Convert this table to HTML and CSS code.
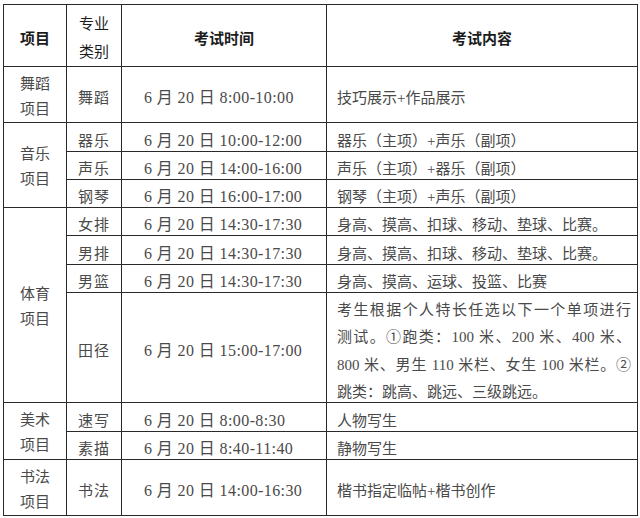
FILE: index.html
```html
<!DOCTYPE html>
<html lang="zh-CN">
<head>
<meta charset="utf-8">
<title>考试安排</title>
<link rel="stylesheet" href="styles.css">
</head>
<body>
<table class="schedule">
  <colgroup>
    <col class="c-group">
    <col class="c-major">
    <col class="c-time">
    <col class="c-content">
  </colgroup>
  <thead>
    <tr class="r-head">
      <th class="strong">项目</th>
      <th class="light two">专业<br>类别</th>
      <th class="strong">考试时间</th>
      <th class="strong">考试内容</th>
    </tr>
  </thead>
  <tbody>
    <tr class="r-double">
      <td class="group">舞蹈<br>项目</td>
      <td class="major">舞蹈</td>
      <td class="time">6 月 20 日 8:00-10:00</td>
      <td class="content">技巧展示+作品展示</td>
    </tr>
    <tr class="r-29">
      <td class="group" rowspan="3">音乐<br>项目</td>
      <td class="major">器乐</td>
      <td class="time">6 月 20 日 10:00-12:00</td>
      <td class="content">器乐（主项）+声乐（副项）</td>
    </tr>
    <tr class="r-28">
      <td class="major">声乐</td>
      <td class="time">6 月 20 日 14:00-16:00</td>
      <td class="content">声乐（主项）+器乐（副项）</td>
    </tr>
    <tr class="r-28">
      <td class="major">钢琴</td>
      <td class="time">6 月 20 日 16:00-17:00</td>
      <td class="content">钢琴（主项）+声乐（副项）</td>
    </tr>
    <tr class="r-28">
      <td class="group" rowspan="4">体育<br>项目</td>
      <td class="major">女排</td>
      <td class="time">6 月 20 日 14:30-17:30</td>
      <td class="content">身高、摸高、扣球、移动、垫球、比赛。</td>
    </tr>
    <tr class="r-29">
      <td class="major">男排</td>
      <td class="time">6 月 20 日 14:30-17:30</td>
      <td class="content">身高、摸高、扣球、移动、垫球、比赛。</td>
    </tr>
    <tr class="r-28">
      <td class="major">男篮</td>
      <td class="time">6 月 20 日 14:30-17:30</td>
      <td class="content">身高、摸高、运球、投篮、比赛</td>
    </tr>
    <tr class="r-tall">
      <td class="major">田径</td>
      <td class="time">6 月 20 日 15:00-17:00</td>
      <td class="content para">
        <div class="para-inner">
          <span class="jline">考生根据个人特长任选以下一个单项进行</span>
          <span class="jline">测试。①跑类：100 米、200 米、400 米、</span>
          <span class="jline">800 米、男生 110 米栏、女生 100 米栏。②</span>
          <span class="lline">跳类：跳高、跳远、三级跳远。</span>
        </div>
      </td>
    </tr>
    <tr class="r-29">
      <td class="group" rowspan="2">美术<br>项目</td>
      <td class="major">速写</td>
      <td class="time">6 月 20 日 8:00-8:30</td>
      <td class="content">人物写生</td>
    </tr>
    <tr class="r-28">
      <td class="major">素描</td>
      <td class="time">6 月 20 日 8:40-11:40</td>
      <td class="content">静物写生</td>
    </tr>
    <tr class="r-double">
      <td class="group">书法<br>项目</td>
      <td class="major">书法</td>
      <td class="time">6 月 20 日 14:00-16:30</td>
      <td class="content">楷书指定临帖+楷书创作</td>
    </tr>
  </tbody>
</table>
</body>
</html>
```

FILE: styles.css
```css
html, body {
  margin: 0;
  background: #ffffff;
}

body {
  padding: 4px 0 0 3px;
  font-family: "Liberation Serif", "Noto Sans CJK SC", serif;
  font-size: 15px;
  color: #4a4a4a;
}

.schedule {
  border-collapse: collapse;
  table-layout: fixed;
  width: 634px;
}

.c-group { width: 63px; }
.c-major { width: 55px; }
.c-time { width: 205px; }
.c-content { width: 311px; }

.schedule th,
.schedule td {
  border: 1px solid #2a2a2a;
  padding: 7px 0 0;
  text-align: center;
  vertical-align: middle;
  line-height: 18px;
}

.schedule th {
  color: #1c1c1c;
  font-weight: normal;
}

.schedule th.strong {
  font-weight: bold;
}

.schedule th.two {
  line-height: 28px;
  padding-top: 5px;
}

.schedule td.group {
  line-height: 25px;
  padding-top: 4px;
}

.r-head { height: 62px; }
.r-double { height: 56px; }
.r-29 { height: 29px; }
.r-28 { height: 28px; }
.r-tall { height: 110px; }

.major {
  letter-spacing: 1px;
}

.schedule td.time {
  text-align: left;
  padding-left: 22px;
  font-size: 16px;
  letter-spacing: 0.4px;
}

.schedule td.content {
  text-align: left;
  padding-left: 10px;
  padding-right: 6px;
}

.schedule td.para {
  padding-top: 0;
  line-height: 27.5px;
}

.para-inner {
  margin: 3px 0 -5px;
}

.jline,
.lline {
  display: block;
}

.jline {
  text-align: justify;
  text-align-last: justify;
}
```
